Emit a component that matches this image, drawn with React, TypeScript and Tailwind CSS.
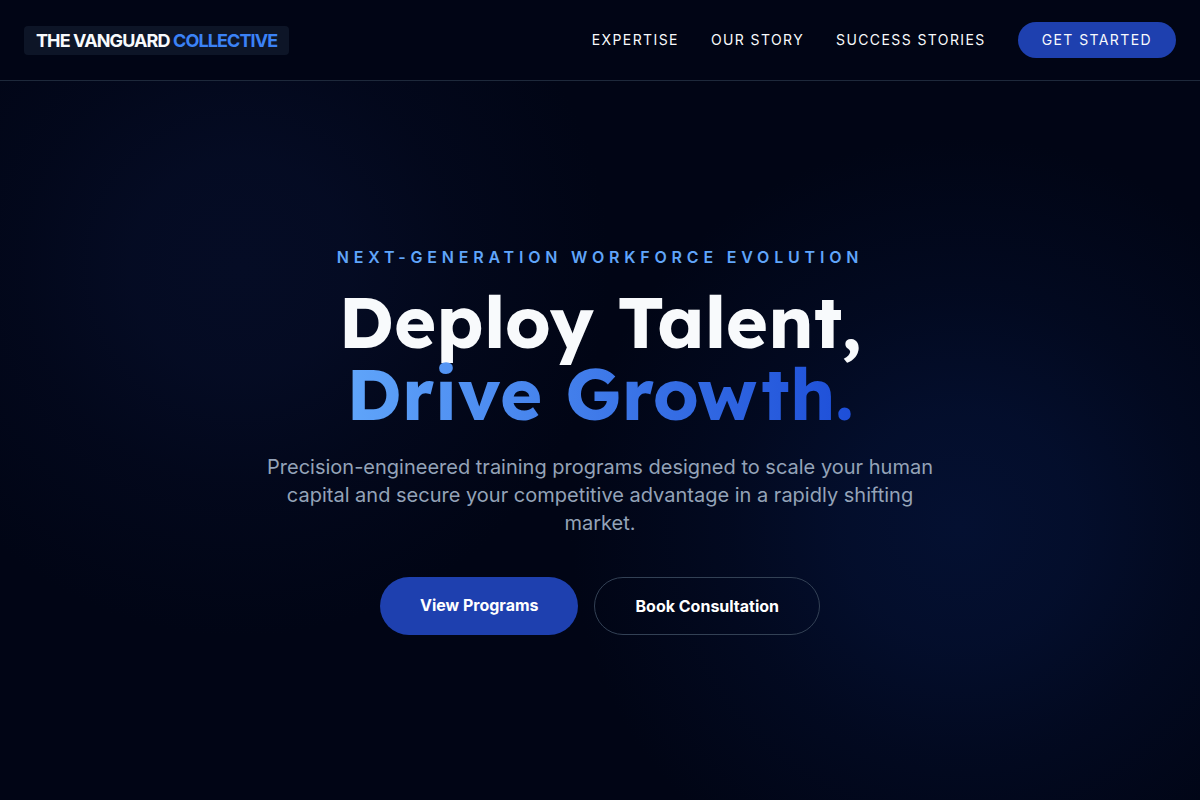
const navLinks = [
  { label: "Expertise", href: "#expertise" },
  { label: "Our Story", href: "#story" },
  { label: "Success Stories", href: "#success" },
];

function Header() {
  return (
    <header className="relative flex h-20 items-center justify-between bg-[#010515] px-6 shadow-[0_1px_0_#1e293b]">
      <a
        href="#top"
        className="rounded bg-[#0d1527] px-3 text-lg leading-[29px] font-bold tracking-tighter text-[#f8fafc] uppercase"
      >
        The Vanguard <span className="text-[#3b82f6]">Collective</span>
      </a>
      <nav className="flex items-center gap-8 text-sm tracking-widest text-[#f8fafc] uppercase">
        {navLinks.map((link) => (
          <a key={link.href} href={link.href}>
            {link.label}
          </a>
        ))}
        <a href="#start" className="rounded-full bg-[#1e40af] px-6 py-2">
          Get Started
        </a>
      </nav>
    </header>
  );
}

function Hero() {
  return (
    <main className="flex flex-1 flex-col items-center justify-center bg-[radial-gradient(circle_at_20%_26%,#050c25_0%,#050c25dd_110px,#050c2566_220px,transparent_370px),radial-gradient(circle_at_80%_62%,#041031_0%,#041031cc_120px,#04103166_230px,transparent_390px)] px-6 text-center">
      <p className="mb-4 font-semibold tracking-[0.3em] text-[#60a5fa] uppercase">
        Next-Generation Workforce Evolution
      </p>
      <h1 className="mb-6 font-['Lexend','Inter',sans-serif] text-7xl leading-none font-bold text-[#f8fafc]">
        Deploy Talent,
        <br />
        <span className="bg-[linear-gradient(to_right,#60a5fa,#1d4ed8)] bg-clip-text text-transparent">
          Drive Growth.
        </span>
      </h1>
      <p className="mb-10 max-w-2xl text-xl text-[#94a3b8]">
        Precision-engineered training programs designed to scale your human
        capital and secure your competitive advantage in a rapidly shifting
        market.
      </p>
      <div className="flex gap-4 font-bold text-white">
        <a href="#programs" className="rounded-full bg-[#1e40af] px-10 py-4">
          View Programs
        </a>
        <a
          href="#consultation"
          className="rounded-full border border-[#334155] px-10 py-4"
        >
          Book Consultation
        </a>
      </div>
    </main>
  );
}

export default function App() {
  return (
    <div
      id="top"
      className="flex min-h-screen flex-col bg-[#010515] font-['Inter',sans-serif]"
    >
      <Header />
      <Hero />
    </div>
  );
}
